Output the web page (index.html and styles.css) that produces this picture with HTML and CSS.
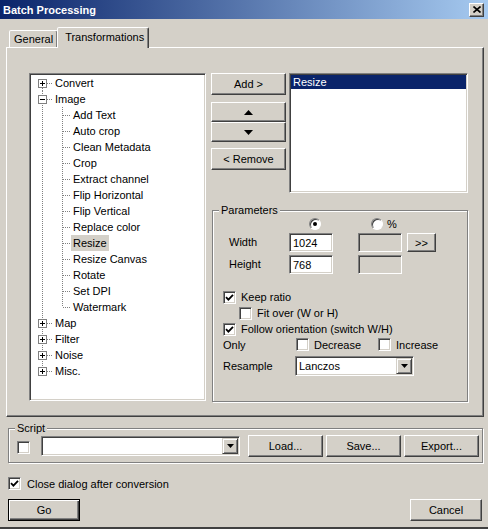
FILE: index.html
```html
<!DOCTYPE html>
<html lang="en">
<head>
    <meta charset="UTF-8">
    <title>Batch Processing</title>
    <link rel="stylesheet" href="styles.css">
</head>
<body>
<div class="window">
    <div class="titlebar">
        <span class="title">Batch Processing</span>
        <span class="close-btn">
            <svg width="8" height="7" viewBox="0 0 8 7"><path d="M0.5 0.5l7 6M7.5 0.5l-7 6" stroke="#000" stroke-width="1.6"/></svg>
        </span>
    </div>

    <div class="tabs">
        <span class="tab">General</span>
        <span class="tab active">Transformations</span>
    </div>

    <div class="tab-panel">
        <!-- arbre des transformations -->
        <div class="tree sunken">
            <div class="tree-lines">
                <div class="node root first">
                    <svg class="exp" width="9" height="9" viewBox="0 0 9 9"><rect x="0.5" y="0.5" width="8" height="8" fill="#fff" stroke="#808080"/><path d="M2 4.5h5M4.5 2v5" stroke="#000"/></svg>
                    <span class="dash"></span><span class="label">Convert</span>
                </div>
                <div class="node root">
                    <svg class="exp" width="9" height="9" viewBox="0 0 9 9"><rect x="0.5" y="0.5" width="8" height="8" fill="#fff" stroke="#808080"/><path d="M2 4.5h5" stroke="#000"/></svg>
                    <span class="dash"></span><span class="label">Image</span>
                </div>
                <div class="children">
                    <div class="node child"><span class="dash"></span><span class="label">Add Text</span></div>
                    <div class="node child"><span class="dash"></span><span class="label">Auto crop</span></div>
                    <div class="node child"><span class="dash"></span><span class="label">Clean Metadata</span></div>
                    <div class="node child"><span class="dash"></span><span class="label">Crop</span></div>
                    <div class="node child"><span class="dash"></span><span class="label">Extract channel</span></div>
                    <div class="node child"><span class="dash"></span><span class="label">Flip Horizontal</span></div>
                    <div class="node child"><span class="dash"></span><span class="label">Flip Vertical</span></div>
                    <div class="node child"><span class="dash"></span><span class="label">Replace color</span></div>
                    <div class="node child"><span class="dash"></span><span class="label selected">Resize</span></div>
                    <div class="node child"><span class="dash"></span><span class="label">Resize Canvas</span></div>
                    <div class="node child"><span class="dash"></span><span class="label">Rotate</span></div>
                    <div class="node child"><span class="dash"></span><span class="label">Set DPI</span></div>
                    <div class="node child"><span class="dash"></span><span class="label">Watermark</span></div>
                </div>
                <div class="node root">
                    <svg class="exp" width="9" height="9" viewBox="0 0 9 9"><rect x="0.5" y="0.5" width="8" height="8" fill="#fff" stroke="#808080"/><path d="M2 4.5h5M4.5 2v5" stroke="#000"/></svg>
                    <span class="dash"></span><span class="label">Map</span>
                </div>
                <div class="node root">
                    <svg class="exp" width="9" height="9" viewBox="0 0 9 9"><rect x="0.5" y="0.5" width="8" height="8" fill="#fff" stroke="#808080"/><path d="M2 4.5h5M4.5 2v5" stroke="#000"/></svg>
                    <span class="dash"></span><span class="label">Filter</span>
                </div>
                <div class="node root">
                    <svg class="exp" width="9" height="9" viewBox="0 0 9 9"><rect x="0.5" y="0.5" width="8" height="8" fill="#fff" stroke="#808080"/><path d="M2 4.5h5M4.5 2v5" stroke="#000"/></svg>
                    <span class="dash"></span><span class="label">Noise</span>
                </div>
                <div class="node root last">
                    <svg class="exp" width="9" height="9" viewBox="0 0 9 9"><rect x="0.5" y="0.5" width="8" height="8" fill="#fff" stroke="#808080"/><path d="M2 4.5h5M4.5 2v5" stroke="#000"/></svg>
                    <span class="dash"></span><span class="label">Misc.</span>
                </div>
            </div>
        </div>

        <div class="right-col">
            <div class="top-row">
                <div class="btn-col">
                    <button class="btn add-btn">Add &gt;</button>
                    <button class="btn arrow-btn up-btn"><svg width="9" height="5" viewBox="0 0 9 5"><path d="M0 5L4.5 0L9 5Z" fill="#000"/></svg></button>
                    <button class="btn arrow-btn"><svg width="9" height="5" viewBox="0 0 9 5"><path d="M0 0L4.5 5L9 0Z" fill="#000"/></svg></button>
                    <button class="btn remove-btn">&lt; Remove</button>
                </div>
                <div class="listbox sunken">
                    <div class="list-item selected">Resize</div>
                </div>
            </div>

            <div class="group params">
                <span class="group-title">Parameters</span>
                <div class="size-grid">
                    <span class="radio radio-px"><span class="dot"></span></span>
                    <span class="radio-pct"><span class="radio"></span><span>%</span></span>

                    <span class="field-label">Width</span>
                    <span class="input sunken">1024</span>
                    <span class="input sunken disabled"></span>
                    <button class="btn small-btn">&gt;&gt;</button>

                    <span class="field-label">Height</span>
                    <span class="input sunken">768</span>
                    <span class="input sunken disabled"></span>
                </div>

                <div class="check-list">
                    <div class="check-row">
                        <span class="checkbox"><svg width="9" height="9" viewBox="0 0 9 9"><path d="M1 4.2l2.4 2.4L8 1.8" fill="none" stroke="#000" stroke-width="1.8"/></svg></span>
                        <span>Keep ratio</span>
                    </div>
                    <div class="check-row indent">
                        <span class="checkbox"></span>
                        <span>Fit over (W or H)</span>
                    </div>
                    <div class="check-row">
                        <span class="checkbox"><svg width="9" height="9" viewBox="0 0 9 9"><path d="M1 4.2l2.4 2.4L8 1.8" fill="none" stroke="#000" stroke-width="1.8"/></svg></span>
                        <span>Follow orientation (switch W/H)</span>
                    </div>
                    <div class="check-row only-row">
                        <span class="row-label only-label">Only</span>
                        <span class="option decrease"><span class="checkbox"></span><span>Decrease</span></span>
                        <span class="option"><span class="checkbox"></span><span>Increase</span></span>
                    </div>
                </div>

                <div class="resample-row">
                    <span class="row-label resample-label">Resample</span>
                    <div class="combo sunken resample">
                        <span class="combo-text">Lanczos</span>
                        <span class="drop-btn"><svg width="7" height="4" viewBox="0 0 7 4"><path d="M0 0L3.5 4L7 0Z" fill="#000"/></svg></span>
                    </div>
                </div>
            </div>
        </div>
    </div>

    <div class="group script">
        <span class="group-title">Script</span>
        <div class="script-row">
            <span class="checkbox script-check"></span>
            <div class="combo sunken script-combo">
                <span class="combo-text"></span>
                <span class="drop-btn"><svg width="7" height="4" viewBox="0 0 7 4"><path d="M0 0L3.5 4L7 0Z" fill="#000"/></svg></span>
            </div>
            <button class="btn script-btn load-btn">Load...</button>
            <button class="btn script-btn">Save...</button>
            <button class="btn script-btn">Export...</button>
        </div>
    </div>

    <div class="check-row close-row">
        <span class="checkbox"><svg width="9" height="9" viewBox="0 0 9 9"><path d="M1 4.2l2.4 2.4L8 1.8" fill="none" stroke="#000" stroke-width="1.8"/></svg></span>
        <span>Close dialog after conversion</span>
    </div>

    <div class="footer">
        <button class="btn default-btn">Go</button>
        <button class="btn">Cancel</button>
    </div>
</div>
</body>
</html>
```

FILE: styles.css
```css
* {
    box-sizing: border-box;
}

body {
    margin: 0;
    font-family: "Liberation Sans", Arial, sans-serif;
    font-size: 11px;
    color: #000;
}

.window {
    width: 488px;
    height: 529px;
    background: #d4d0c8;
    display: flex;
    flex-direction: column;
    border-bottom: 2px solid #404040;
    overflow: hidden;
}

/* barre de titre */
.titlebar {
    height: 19px;
    flex-shrink: 0;
    display: flex;
    align-items: center;
    justify-content: space-between;
    padding: 0 4px 0 3px;
    background: linear-gradient(to right, #0a246a, #a6caf0);
}

.title {
    color: #fff;
    font-weight: bold;
    font-size: 11px;
}

.close-btn {
    width: 15px;
    height: 14px;
    display: flex;
    align-items: center;
    justify-content: center;
    background: #d4d0c8;
    border: 1px solid;
    border-color: #fff #404040 #404040 #fff;
    box-shadow: inset -1px -1px 0 #808080;
}

/* onglets */
.tabs {
    display: flex;
    align-items: flex-end;
    height: 21px;
    margin-top: 8px;
    padding-left: 9px;
    position: relative;
    z-index: 1;
    flex-shrink: 0;
}

.tab {
    height: 17px;
    margin-bottom: 1px;
    padding: 0 4px;
    display: flex;
    align-items: center;
    background: #d4d0c8;
    border: 1px solid;
    border-bottom: none;
    border-color: #fff #404040 transparent #fff;
    box-shadow: inset -1px 0 0 #808080;
    border-radius: 2px 2px 0 0;
}

.tab.active {
    height: 21px;
    margin-bottom: 0;
    margin-left: -1px;
    padding: 3px 4px 0 7px;
    align-items: flex-start;
}

.tab-panel {
    height: 370px;
    margin: -1px 4px 0 6px;
    display: flex;
    padding: 25px 0 0 22px;
    border: 1px solid;
    border-color: #fff #404040 #404040 #fff;
    box-shadow: inset -1px -1px 0 #808080;
    flex-shrink: 0;
}

.sunken {
    background: #fff;
    border: 1px solid;
    border-color: #808080 #fff #fff #808080;
    box-shadow: inset 1px 1px 0 #404040, inset -1px -1px 0 #d4d0c8;
}

/* arbre */
.tree {
    width: 177px;
    height: 328px;
    padding: 1px;
}

.tree-lines {
    display: flex;
    flex-direction: column;
}

.node {
    height: 16px;
    display: flex;
    align-items: center;
    white-space: nowrap;
}

.node.root {
    padding-left: 7px;
    background-image: repeating-linear-gradient(to bottom, #808080 0 1px, transparent 1px 2px);
    background-repeat: no-repeat;
    background-position: 11px 0;
    background-size: 1px 16px;
}

.node.root.first {
    background-position: 11px 9px;
    background-size: 1px 7px;
}

.node.root.last {
    background-size: 1px 8px;
}

.exp {
    display: block;
    flex-shrink: 0;
}

.dash {
    height: 1px;
    background-image: repeating-linear-gradient(to right, #808080 0 1px, transparent 1px 2px);
}

.root .dash {
    width: 6px;
}

.root .label {
    margin-left: 2px;
}

.children {
    background-image:
        repeating-linear-gradient(to bottom, #808080 0 1px, transparent 1px 2px),
        repeating-linear-gradient(to bottom, #808080 0 1px, transparent 1px 2px);
    background-repeat: no-repeat;
    background-position: 11px 0, 31px 0;
    background-size: 1px 100%, 1px calc(100% - 8px);
}

.node.child {
    padding-left: 32px;
}

.child .dash {
    width: 7px;
}

.child .label {
    margin-left: 1px;
    padding: 0 2px;
    line-height: 16px;
}

.label.selected {
    background: #d4d0c8;
}

/* colonne de droite */
.right-col {
    margin-left: 5px;
    display: flex;
    flex-direction: column;
}

.top-row {
    display: flex;
    height: 120px;
}

.btn {
    font-family: inherit;
    font-size: 11px;
    color: #000;
    background: #d4d0c8;
    border: 1px solid;
    border-color: #fff #404040 #404040 #fff;
    box-shadow: inset -1px -1px 0 #808080;
    padding: 0;
    display: flex;
    align-items: center;
    justify-content: center;
}

.btn-col {
    width: 75px;
    display: flex;
    flex-direction: column;
}

.btn-col .btn {
    width: 75px;
}

.add-btn,
.remove-btn {
    height: 22px;
}

.arrow-btn {
    height: 20px;
}

.up-btn {
    margin-top: 7px;
}

.remove-btn {
    margin-top: 6px;
}

.listbox {
    width: 179px;
    height: 120px;
    margin-left: 3px;
    padding: 1px;
}

.list-item {
    height: 14px;
    line-height: 14px;
    padding-left: 2px;
}

.list-item.selected {
    background: #0a246a;
    color: #fff;
}

/* cadres de groupe */
.group {
    display: flex;
    flex-direction: column;
    border: 1px solid #808080;
    box-shadow: inset 1px 1px 0 #fff, 1px 1px 0 #fff;
}

.group-title {
    align-self: flex-start;
    margin-top: -7px;
    margin-left: -4px;
    padding: 0 2px;
    line-height: 13px;
    background: #d4d0c8;
}

.params {
    width: 256px;
    height: 192px;
    margin: 17px 0 0 1px;
    padding-left: 10px;
}

.size-grid {
    display: grid;
    grid-template-columns: 60px 69px 49px 29px;
    grid-template-rows: 13px 19px 19px;
    row-gap: 3px;
    margin-left: 6px;
    align-items: center;
}

.field-label {
    margin-top: -2px;
}

.radio {
    width: 12px;
    height: 12px;
    border-radius: 50%;
    background: #fff;
    border: 1px solid;
    border-color: #808080 #fff #fff #808080;
    box-shadow: inset 1px 1px 0 #404040;
    display: flex;
    align-items: center;
    justify-content: center;
}

.radio .dot {
    width: 4px;
    height: 4px;
    border-radius: 50%;
    background: #000;
}

.radio-px {
    grid-column: 2;
    margin-left: 20px;
}

.radio-pct {
    grid-column: 3 / 5;
    margin-left: 13px;
    display: flex;
    align-items: center;
    gap: 4px;
}

.input {
    width: 44px;
    height: 19px;
    padding: 3px 0 0 3px;
    line-height: 13px;
}

.input.disabled {
    background: #d4d0c8;
}

.small-btn {
    width: 29px;
    height: 19px;
}

.check-list {
    margin-top: 15px;
    display: flex;
    flex-direction: column;
}

.check-row {
    height: 16px;
    display: flex;
    align-items: center;
    white-space: nowrap;
}

.check-row.indent {
    padding-left: 16px;
}

.checkbox {
    width: 13px;
    height: 13px;
    flex-shrink: 0;
    margin-right: 5px;
    background: #fff;
    border: 1px solid;
    border-color: #808080 #fff #fff #808080;
    box-shadow: inset 1px 1px 0 #404040, inset -1px -1px 0 #d4d0c8;
    display: flex;
    align-items: center;
    justify-content: center;
}

.only-row {
    height: 15px;
}

.row-label.only-label {
    width: 73px;
}

.option {
    display: flex;
    align-items: center;
}

.option.decrease {
    width: 82px;
}

.resample-row {
    margin-top: 4px;
    display: flex;
    align-items: center;
    height: 20px;
}

.resample-label {
    width: 72px;
}

.combo {
    height: 20px;
    padding: 1px;
    display: flex;
    align-items: center;
}

.resample {
    width: 119px;
}

.combo-text {
    flex: 1;
    padding-left: 2px;
}

.drop-btn {
    width: 16px;
    height: 16px;
    background: #d4d0c8;
    border: 1px solid;
    border-color: #d4d0c8 #404040 #404040 #d4d0c8;
    box-shadow: inset 1px 1px 0 #fff, inset -1px -1px 0 #808080;
    display: flex;
    align-items: center;
    justify-content: center;
}

/* script */
.script {
    height: 35px;
    margin: 11px 5px 0 8px;
    padding-left: 8px;
    flex-shrink: 0;
}

.script .group-title {
    margin-left: -2px;
}

.script-row {
    display: flex;
    align-items: center;
    height: 22px;
}

.script-check {
    margin: 3px 0 0 0;
}

.script-combo {
    width: 199px;
    margin-left: 11px;
}

.script-btn {
    width: 75px;
    height: 22px;
    margin-left: 3px;
}

.load-btn {
    margin-left: 8px;
}

.close-row {
    margin: 14px 0 0 8px;
    height: 13px;
}

.close-row .checkbox {
    margin-right: 6px;
}

.footer {
    margin-top: 9px;
    padding: 0 6px 0 8px;
    display: flex;
    justify-content: space-between;
}

.footer .btn {
    width: 72px;
    height: 22px;
}

.btn.default-btn {
    border: 1px solid #000;
    box-shadow: inset 1px 1px 0 #fff, inset -1px -1px 0 #404040, inset -2px -2px 0 #808080;
}
```
